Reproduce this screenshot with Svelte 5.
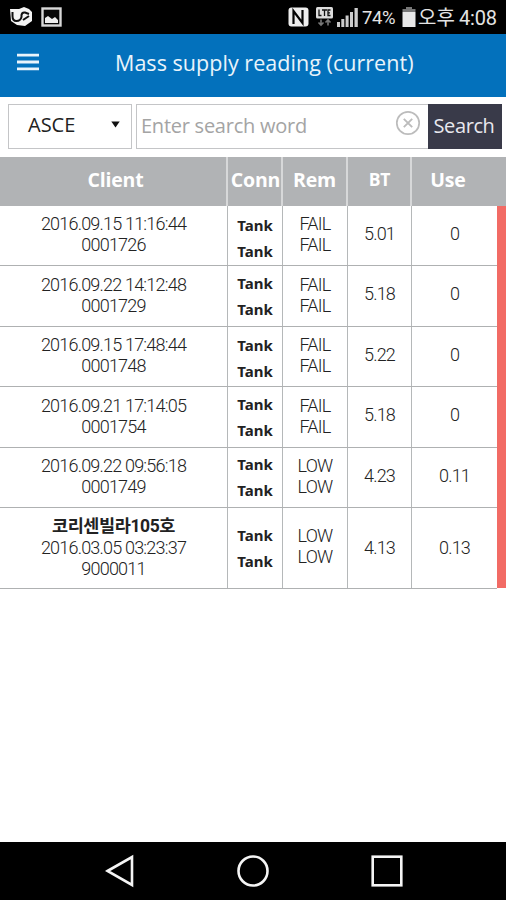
<script>
  const rows = [
    { date: '2016.09.15 11:16:44', id: '0001726', state: 'FAIL', bt: '5.01', use: '0', height: 60, drop: 4 },
    { date: '2016.09.22 14:12:48', id: '0001729', state: 'FAIL', bt: '5.18', use: '0', height: 61, drop: 0 },
    { date: '2016.09.15 17:48:44', id: '0001748', state: 'FAIL', bt: '5.22', use: '0', height: 60, drop: 2 },
    { date: '2016.09.21 17:14:05', id: '0001754', state: 'FAIL', bt: '5.18', use: '0', height: 61, drop: -1 },
    { date: '2016.09.22 09:56:18', id: '0001749', state: 'LOW', bt: '4.23', use: '0.11', height: 60, drop: -1 },
    { name: '코리센빌라105호', date: '2016.03.05 03:23:37', id: '9000011', state: 'LOW', bt: '4.13', use: '0.13', height: 81, drop: 0 }
  ];
</script>

<div class="screen">
  <div class="status">
    <svg class="app" width="24" height="20" viewBox="0 0 24 20">
      <path d="M1 2 10 2 15 0 20 2 23 5V14L16 19 8 18 2 14Z" fill="#f4f4f4" />
      <path d="M3.5 5V9Q3.5 14 7.5 14T12.5 10V8Q13 5 16 5.5L20 7M14 13 20 9" fill="none" stroke="#111" stroke-width="2" />
    </svg>
    <svg class="photo" width="21" height="20" viewBox="0 0 21 20">
      <rect x="1.5" y="1.5" width="18" height="17" fill="#080808" stroke="#d8d8d8" stroke-width="2.4" />
      <path d="M4 16V11L7 9 11 12 14 10 17 13V16Z" fill="#eee" />
    </svg>
    <svg class="nfc" width="21" height="20" viewBox="0 0 21 20">
      <rect x="0.5" y="0.5" width="20" height="19" rx="3" fill="#eee" />
      <path d="M5.5 17V4L14.5 16V3" fill="none" stroke="#050505" stroke-width="2.2" />
    </svg>
    <svg class="lte" width="17" height="20" viewBox="0 0 17 20">
      <rect width="17" height="11.5" rx="1.5" fill="#ddd" />
      <path d="M3 2.5V8.5H5.5M6 3H11M8.5 3V9M14.5 3H12V8.5H14.5M12 5.8H14" fill="none" stroke="#111" stroke-width="1.3" />
      <path d="M5 12.5V18M2.5 15.5 5 18 7.5 15.5M12 18.5V13M9.5 15.5 12 13 14.5 15.5" fill="none" stroke="#777" stroke-width="1.6" />
    </svg>
    <svg class="signal" width="22" height="20" viewBox="0 0 22 20">
      <path d="M0 15H3V20H0ZM4.3 12H7.3V20H4.3ZM8.6 8.5H11.6V20H8.6ZM13 5H16V20H13ZM17.5 1H20.8V20H17.5Z" fill="#ccc" />
    </svg>
    <span class="percent">74%</span>
    <svg class="battery" width="14" height="20" viewBox="0 0 14 20">
      <path d="M4 0H10V2H13.5V5H.5V2H4Z" fill="#777" />
      <path d="M.5 5H13.5V20H.5Z" fill="#e8e8e8" />
    </svg>
    <span class="ampm">오후</span>
    <span class="clock">4:08</span>
  </div>

  <header>
    <svg width="22" height="18" viewBox="0 0 22 18">
      <path d="M0 2.2H22M0 9H22M0 15.8H22" stroke="#e9f4fb" stroke-width="2.8" />
    </svg>
    <h1>Mass supply reading (current)</h1>
  </header>

  <div class="search">
    <div class="select">
      <span>ASCE</span>
      <svg width="9" height="7" viewBox="0 0 9 7"><path d="M.3.5H8.7L4.5 6.5Z" fill="#111" /></svg>
    </div>
    <div class="field">
      <span>Enter search word</span>
      <svg width="26" height="26" viewBox="0 0 26 26" fill="none" stroke="#bcbcbc" stroke-width="1.7">
        <circle cx="13" cy="13" r="11.2" />
        <path d="M8.8 8.8 17.2 17.2M17.2 8.8 8.8 17.2" stroke-width="1.9" />
      </svg>
    </div>
    <button>Search</button>
  </div>

  <div class="grid head">
    <div><span class="h-client">Client</span></div>
    <div><span class="h-conn">Conn</span></div>
    <div><span class="h-rem">Rem</span></div>
    <div><span class="h-bt">BT</span></div>
    <div><span class="h-use">Use</span></div>
  </div>

  <div class="body">
    <div class="rows">
      {#each rows as row}
        <div class="grid row" style="height: {row.height}px">
          <div class="client">
            {#if row.name}<b>{row.name}</b>{/if}
            <span class="date">{row.date}</span>
            <span class="id">{row.id}</span>
          </div>
          <div class="conn" style="padding-top: {Math.max(row.drop, 0)}px; padding-bottom: {Math.max(-row.drop, 0)}px"><b>Tank</b><b>Tank</b></div>
          <div class="rem"><span>{row.state}</span><span>{row.state}</span></div>
          <div class="num">{row.bt}</div>
          <div class="num">{row.use}</div>
        </div>
      {/each}
    </div>
    <div class="bar"></div>
  </div>

  <nav>
    <svg width="30" height="34" viewBox="0 0 30 34"><path d="M2.5 17 27 3V31Z" /></svg>
    <svg width="34" height="34" viewBox="0 0 34 34"><circle cx="17" cy="17" r="14.5" /></svg>
    <svg width="34" height="34" viewBox="0 0 34 34"><rect x="2.7" y="2.7" width="28.6" height="28.6" /></svg>
  </nav>
</div>

<style>
  .screen {
    display: flex;
    flex-direction: column;
    width: 506px;
    height: 900px;
    overflow: hidden;
    background: #fff;
    color: #222;
    font-family: "Open Sans", "Noto Sans CJK KR", sans-serif;
  }
  .screen * { box-sizing: border-box; }
  span, b, h1 { white-space: nowrap; }
  svg { display: block; flex: none; }

  .status {
    display: flex;
    align-items: center;
    height: 34px;
    padding-left: 9px;
    background: #000;
    color: #e4e4e4;
    font-family: Roboto, "Noto Sans CJK KR", sans-serif;
    font-size: 20px;
    line-height: 34px;
  }
  .photo { margin-left: 8px; }
  .nfc { margin-left: 226px; }
  .lte { margin-left: 7px; }
  .signal { margin-left: 4px; }
  .percent { width: 40px; margin-left: 3px; padding-top: 2px; font-size: 18.5px; letter-spacing: -.4px; }
  .battery { margin-left: 0; }
  .ampm { width: 37px; margin-left: 2px; padding-top: 1px; font-size: 20px; }
  .clock { margin-left: 4px; padding-top: 2px; letter-spacing: -.2px; }

  header {
    display: flex;
    align-items: flex-start;
    height: 63px;
    padding: 19px 0 0 17px;
    background: #0371bc;
  }
  h1 {
    margin: -5px 0 0 76px;
    color: #e9f4fb;
    font-size: 21.5px;
    font-weight: 400;
    line-height: 30px;
    letter-spacing: .04px;
  }

  .search {
    display: flex;
    height: 60px;
    padding: 7px 4px 8px 8px;
  }
  .select, .field {
    display: flex;
    align-items: center;
    justify-content: space-between;
    border: 1px solid #c4c5c7;
    font-size: 20px;
  }
  .select { width: 124px; margin-right: 4px; padding: 0 11px 4px 19px; }
  .field { width: 292px; padding: 0 7px 7px 4px; color: #a4a4a4; border-right: 0; }
  .field span { padding-top: 4px; letter-spacing: -.25px; }
  button {
    width: 74px;
    padding: 0 2px 2px 0;
    border: 0;
    background: #393a49;
    color: #e8e8ee;
    font: 400 20px "Open Sans", sans-serif;
    letter-spacing: -.4px;
  }

  .grid { display: grid; grid-template-columns: 228px 55px 65px 64px 1fr; }
  .grid > div {
    display: flex;
    flex-direction: column;
    align-items: center;
    justify-content: center;
    border-right: 1px solid #b5b8b9;
  }
  .grid > div:last-child { border-right: 0; }

  .head {
    height: 49px;
    background: #b1b3b5;
    color: #fff;
    font-size: 19.5px;
    font-weight: 700;
    letter-spacing: -.2px;
  }
  .head > div { padding-bottom: 5px; border-right: 2px solid #d7d8d9; }
  .h-client { padding-left: 5px; }
  .h-conn { padding-left: 2px; }
  .h-bt { padding-left: 1px; font-size: 17.5px; }
  .h-use { margin-right: 22px; }

  .body { display: flex; height: 383px; }
  .rows { width: 497px; }
  .bar { width: 9px; height: 382px; background: #f26b65; }
  .row {
    border-bottom: 1px solid #afb1b2;
    font-family: Roboto, "Noto Sans CJK KR", sans-serif;
    font-size: 18px;
    font-weight: 300;
    line-height: 21px;
    letter-spacing: -.8px;
  }
  .row .client { padding-bottom: 3px; }
  .row .rem { padding-bottom: 3px; }
  .row:last-child .rem { padding-bottom: 4px; }
  .row .num { padding-bottom: 5px; }
  .row:last-child .num { padding-bottom: 2px; }
  .row:last-child .client { padding-bottom: 2px; }
  .client b {
    font-family: Roboto, "Noto Sans CJK KR", sans-serif;
    font-size: 17.5px;
    font-weight: 700;
    letter-spacing: -.4px;
  }
  .conn b {
    font-family: "Noto Sans", "Open Sans", sans-serif;
    font-size: 15px;
    font-weight: 700;
    line-height: 26px;
    letter-spacing: 0;
  }

  nav {
    display: flex;
    align-items: flex-start;
    height: 58px;
    margin-top: auto;
    padding: 12px 0 0 105px;
    background: #000;
  }
  nav svg { fill: none; stroke: #f5f5f5; stroke-width: 2.6; }
  nav svg:nth-child(2) { margin-left: 101px; }
  nav svg:nth-child(3) { margin-left: 100px; }
</style>
